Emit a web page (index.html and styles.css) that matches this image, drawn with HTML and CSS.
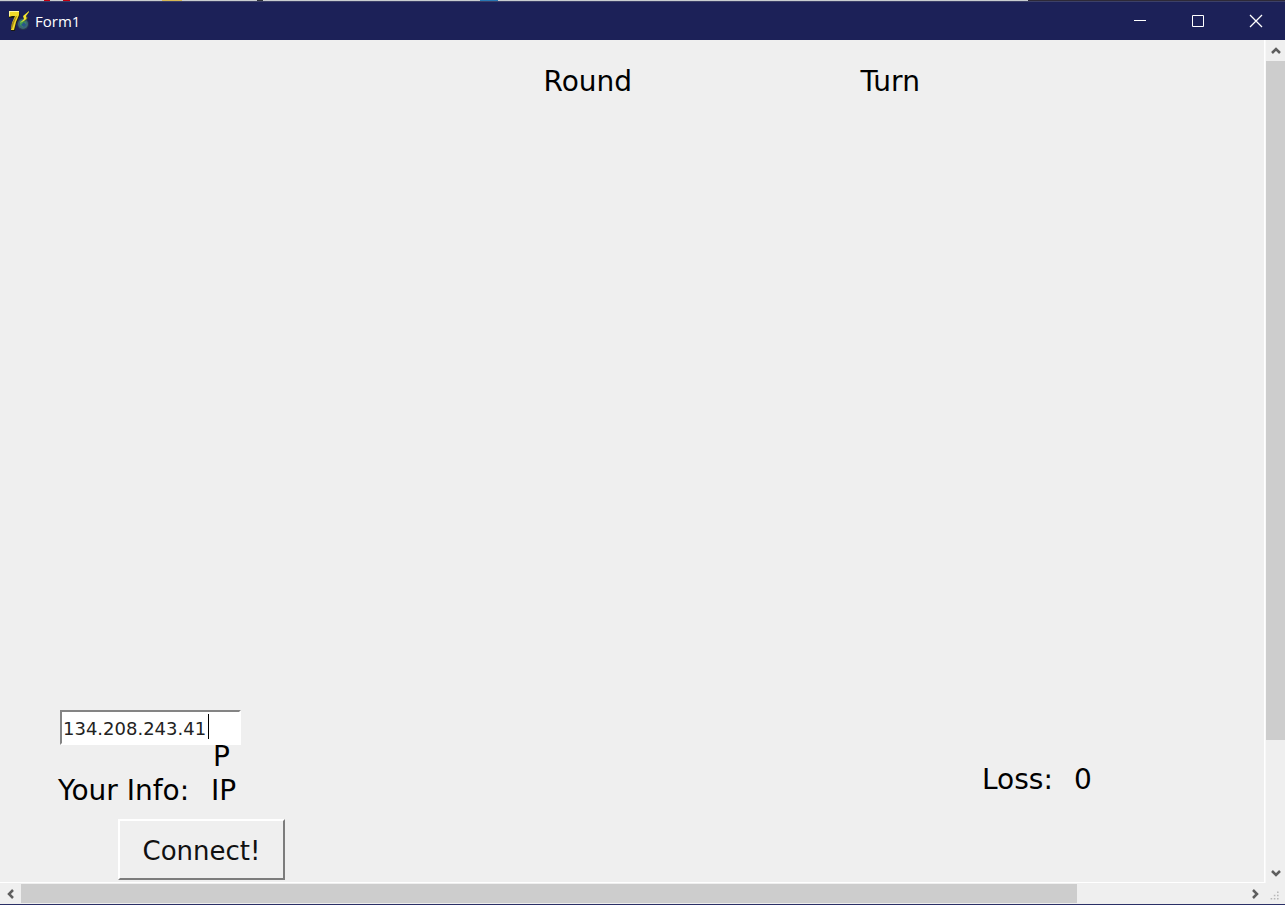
FILE: index.html
```html
<!DOCTYPE html>
<html lang="en">
<head>
<meta charset="utf-8">
<title>Form1</title>
<link rel="stylesheet" href="styles.css">
</head>
<body>
<div class="window">
  <div class="backdrop"></div>
  <header class="titlebar">
    <svg class="app-icon" viewBox="0 0 22 22" aria-hidden="true">
      <path d="M2 2h9l1 3-4 9-1 7H3l1-6 3-7H1z" fill="#1b1b10"/>
      <path d="M1 1h10v4L8 12 6 20H3l1-7 3-7H4L1 7z" fill="#f0d928"/>
      <path d="M1 1h10v1H2v4H1z" fill="#fff9a0"/>
      <path d="M8 6h1l-3 7-2 6H3l1-6z" fill="#a68b18"/>
      <circle cx="15" cy="14" r="6" fill="#27394e"/>
      <circle cx="15" cy="14" r="5" fill="#3b6577"/>
      <path d="M12 11l4-1 2 3-3 4-3-2z" fill="#3d9a55"/>
      <path d="M13 15l3-3 2 3-2 2z" fill="#28568b"/>
      <path d="M21 1l-6 5 1 3-4 4 7-4-1-3 3-4z" fill="#f4e52c"/>
      <path d="M19 6l1 2-5 5 4-5z" fill="#55510e"/>
    </svg>
    <h1 class="title">Form1</h1>
    <button class="caption-button" type="button" aria-label="Minimize"><svg viewBox="0 0 14 14"><path d="M1 6.500h12"/></svg></button>
    <button class="caption-button" type="button" aria-label="Maximize"><svg viewBox="0 0 14 14"><path d="M1.500 1.500h11v11h-11z"/></svg></button>
    <button class="caption-button" type="button" aria-label="Close"><svg viewBox="0 0 14 14"><path d="M1 1l12 12M13 1L1 13" stroke-width="1.300"/></svg></button>
  </header>
  <div class="body">
    <main class="form">
      <div class="status">
        <span class="label">Round</span>
        <span class="label">Turn</span>
      </div>
      <div class="footer">
        <div class="connection">
          <input class="address" id="address" type="text" value="134.208.243.41" aria-label="Server address">
          <span class="caret"></span>
          <label class="label address-label" for="address">P</label>
          <div class="label info"><span>Your Info:</span><span>IP</span></div>
          <button class="connect" type="button">Connect!</button>
        </div>
        <div class="label loss"><span>Loss:</span><span>0</span></div>
      </div>
    </main>
    <div class="scroll vertical">
      <button class="arrow" type="button" aria-label="Scroll up"><svg viewBox="0 0 12 12"><path d="M2 8l4-4 4 4"/></svg></button>
      <div class="track"><div class="thumb"></div></div>
      <button class="arrow" type="button" aria-label="Scroll down"><svg viewBox="0 0 12 12"><path d="M2 4l4 4 4-4"/></svg></button>
    </div>
    <div class="scroll horizontal">
      <button class="arrow" type="button" aria-label="Scroll left"><svg viewBox="0 0 12 12"><path d="M8 2L4 6l4 4"/></svg></button>
      <div class="track"><div class="thumb"></div></div>
      <button class="arrow" type="button" aria-label="Scroll right"><svg viewBox="0 0 12 12"><path d="M4 2l4 4-4 4"/></svg></button>
    </div>
    <svg class="grip" viewBox="0 0 20 21" aria-hidden="true"><path d="M10 8h2v2h-2zM6 12h2v2H6zM10 12h2v2h-2zM2 16h2v2H2zM6 16h2v2H6zM10 16h2v2h-2z"/></svg>
  </div>
</div>
</body>
</html>
```
FILE: styles.css
```css
* { box-sizing: border-box; }
body { margin: 0; background: #efefef; color: #000; font-family: "DejaVu Sans", sans-serif; }
button { font: inherit; color: inherit; padding: 0; border: 0; background: none; }
.window { display: flex; flex-direction: column; min-height: 100vh; border-bottom: 1px solid #2a2f66; }
.backdrop {
  height: 1px;
  background: linear-gradient(90deg, #c9cdd0 0 44px, #c00010 44px 50px, #c9cdd0 50px 63px, #c00010 63px 70px, #c9cdd0 70px 162px, #d8b854 162px 182px, #c9cdd0 182px 257px, #30343c 257px 263px, #c9cdd0 263px 480px, #2878b4 480px 498px, #c9cdd0 498px 80%, #2e2a38 80%);
}
.titlebar {
  display: flex;
  align-items: center;
  height: 39px;
  padding-left: 8px;
  background: #1c2158;
  border-top: 1px solid #3c4068;
  color: #fff;
}
.app-icon { width: 22px; height: 22px; }
.title { flex: 1; margin: 0 0 0 5px; font: 400 15px/20px "Open Sans", sans-serif; }
.caption-button { display: grid; place-items: center; width: 58px; height: 38px; }
.caption-button svg { width: 14px; height: 14px; fill: none; stroke: #fff; }
.body {
  flex: 1;
  display: grid;
  grid-template-columns: 1fr 20px;
  grid-template-rows: 1fr 21px;
}
.form {
  display: flex;
  flex-direction: column;
  justify-content: space-between;
  border-right: 1px solid #fff;
  border-bottom: 1px solid #fff;
}
.label { font-size: 28px; line-height: 36px; white-space: pre; }
.status {
  display: grid;
  grid-template-columns: 44% 1fr;
  padding: 24px 0 0 43%;
}
.footer { display: flex; justify-content: space-between; padding: 0 166px 2px 58px; }
.connection { display: grid; position: relative; width: 228px; }
.address {
  width: 181px;
  height: 35px;
  margin-left: 2px;
  padding: 2px 1px 0;
  border: 2px solid;
  border-color: #848484 #fff #fff #848484;
  border-radius: 0;
  outline: 0;
  background: #fff;
  color: #222;
  font: 18px/24px "DejaVu Sans", sans-serif;
}
.caret { position: absolute; left: 150px; top: 4px; width: 1px; height: 25px; background: #000; }
.address-label { margin-left: 155px; line-height: 24px; }
.info { display: grid; grid-template-columns: 153px 1fr; line-height: 44px; }
.connect {
  width: 167px;
  height: 61px;
  margin: 6px 0 0 60px;
  padding-top: 2px;
  border: 2px solid;
  border-color: #fff #7c7c7c #7c7c7c #fff;
  color: #111;
  font-size: 26px;
}
.loss { display: grid; grid-template-columns: 92px 24px; padding-top: 52px; }
.scroll { display: flex; }
.vertical { flex-direction: column; border-left: 1px solid #f8f8f8; }
.arrow { display: grid; place-items: center; flex: 0 0 21px; }
.arrow svg { width: 12px; height: 12px; fill: none; stroke: #5e5e5e; stroke-width: 2.500; }
.track { flex: 1; }
.thumb { background: #cdcdcd; }
.vertical .thumb { height: 100%; }
.vertical .track { display: grid; grid-template-rows: 680fr 122fr; }
.horizontal .track { display: grid; grid-template-columns: 1056fr 167fr; padding: 1px 0; }
.grip { width: 20px; height: 21px; fill: #b8b8b8; padding-left: 4px; }
```
